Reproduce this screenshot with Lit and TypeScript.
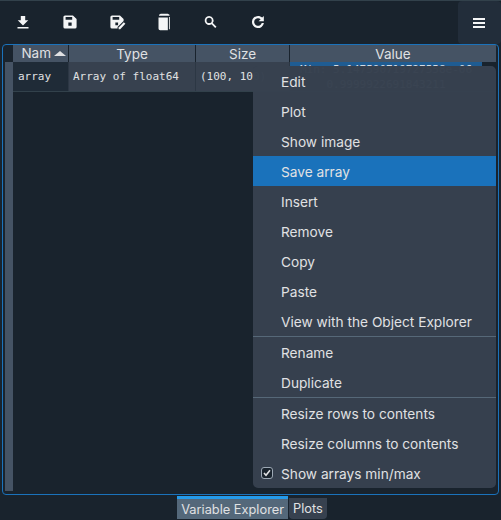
import { LitElement, html, css, svg } from 'lit';
import { customElement } from 'lit/decorators.js';

const ICONS = [
  svg`<path d="M5 14.500h10V16H5zM8 4.500h4v4h2.800L10 13.200 5.200 8.500H8z"/>`,
  svg`<path fill-rule="evenodd" d="M5.500 4h7.200L16 7.300v7.200a1.500 1.500 0 0 1-1.500 1.500h-9A1.500 1.500 0 0 1 4 14.500v-9A1.500 1.500 0 0 1 5.500 4zM6 5.500V8h6V5.500zM8.500 10.500v3h3v-3z"/>`,
  svg`<path fill-rule="evenodd" d="M5.500 4h7.200L16 7.300V9l-5.500 5.500V16h-5A1.500 1.500 0 0 1 4 14.500v-9A1.500 1.500 0 0 1 5.500 4zM6 5.500V8h6V5.500zM8.500 10.500v2.500h2.500v-2.500z"/><path d="M11.500 15l4.700-4.700 1.400 1.400-4.700 4.800h-1.400z"/>`,
  svg`<path d="M7 2.500h6.500l1.500 1v.8H5.500v-.8zM5 6h8.500v11.500H6.500A1.500 1.500 0 0 1 5 16zM14.500 5.500h.8v11h-.8z"/>`,
  svg`<path fill-rule="evenodd" d="M8.300 4.500a4.100 4.100 0 0 1 3.300 6.500l3.400 3.300-1.200 1.200-3.300-3.400A4.100 4.100 0 1 1 8.300 4.500zm0 1.700a2.400 2.400 0 1 0 0 4.800 2.400 2.400 0 0 0 0-4.800z"/>`,
  svg`<path d="M10 4.500c1.500 0 2.800.6 3.800 1.500L15.300 4.500v4.800h-4.800l1.900-1.900a3.500 3.500 0 1 0 1 3.600h2A5.500 5.500 0 1 1 10 4.500z"/>`,
];

type MenuEntry = { label: string; active?: boolean; checked?: boolean } | 'sep';

const MENU: MenuEntry[] = [
  { label: 'Edit' },
  { label: 'Plot' },
  { label: 'Show image' },
  { label: 'Save array', active: true },
  { label: 'Insert' },
  { label: 'Remove' },
  { label: 'Copy' },
  { label: 'Paste' },
  { label: 'View with the Object Explorer' },
  'sep',
  { label: 'Rename' },
  { label: 'Duplicate' },
  'sep',
  { label: 'Resize rows to contents' },
  { label: 'Resize columns to contents' },
  { label: 'Show arrays min/max', checked: true },
];

@customElement('app-root')
export class AppRoot extends LitElement {
  static override styles = css`
    :host {
      display: block;
      position: relative;
      width: 501px;
      height: 520px;
      overflow: hidden;
      background: #19232d;
      font-family: 'Inter', 'Liberation Sans', sans-serif;
      color: #e0e1e3;
    }
    .toolbar {
      display: flex;
      height: 44px;
      box-sizing: border-box;
      border-top: 1px solid #32414b;
    }
    .tools {
      display: flex;
      flex: 1;
      margin-left: -1px;
      padding-bottom: 2px;
    }
    .tool {
      width: 47px;
      display: flex;
      align-items: center;
      justify-content: center;
    }
    .tool svg {
      width: 22px;
      height: 22px;
      fill: #f4f5f6;
    }
    .burger {
      width: 43px;
      background: #222d3a;
      border-radius: 4px;
      display: flex;
      align-items: center;
      justify-content: center;
      flex-direction: column;
      gap: 2px;
      padding-right: 2px;
      box-sizing: border-box;
    }
    .burger i {
      display: block;
      width: 12px;
      height: 2px;
      background: #f4f5f6;
    }
    .frame {
      margin: 0 2px;
      height: 451px;
      box-sizing: border-box;
      border: 1px solid #1a72bb;
      border-radius: 4px;
      padding: 0 2px;
      display: flex;
    }
    .side {
      width: 8px;
      display: flex;
      flex-direction: column;
    }
    .side .corner {
      height: 17px;
    }
    .side .rest {
      flex: 1;
      background: #455364;
      margin-bottom: 3px;
    }
    .table {
      flex: 1;
      min-width: 0;
    }
    .head,
    .row {
      display: grid;
      grid-template-columns: 56px 127px 94px 1fr;
    }
    .head {
      height: 17px;
      background: #455364;
      font-size: 13.5px;
      line-height: 19px;
      text-align: center;
    }
    .head div {
      border-right: 1px solid #19232d;
      box-sizing: border-box;
      white-space: nowrap;
      overflow: hidden;
    }
    .head div:last-child {
      border-right: 0;
    }
    .head .name {
      display: flex;
      align-items: center;
      justify-content: flex-end;
      gap: 3px;
      padding-right: 2px;
    }
    .sort {
      width: 0;
      height: 0;
      border-left: 6px solid transparent;
      border-right: 6px solid transparent;
      border-bottom: 5px solid #e0e1e3;
    }
    .row {
      height: 29px;
      font-family: 'DejaVu Sans Mono', 'Liberation Mono', monospace;
      font-size: 11px;
      line-height: 29px;
      border-bottom: 1px solid #32414b;
    }
    .row div {
      background: #37414f;
      padding-left: 4px;
      white-space: nowrap;
      overflow: hidden;
      border-right: 1px solid #2c3744;
    }
    .row .name {
      background: #1f2b37;
      padding-left: 5px;
    }
    .row .val {
      background: #19232d;
      padding: 0 14px 0 0;
      line-height: 15px;
      color: #d5dbe2;
      border-right: 0;
      text-align: center;
    }
    .val span {
      display: block;
    }
    .val span:first-child {
      background: linear-gradient(#1f5c92 4px, transparent 4px);
    }
    .menu {
      position: absolute;
      left: 253px;
      top: 66px;
      width: 243px;
      height: 422px;
      box-sizing: border-box;
      background: rgba(55, 65, 79, 0.985);
      border-radius: 5px;
      font-size: 13.7px;
    }
    .item {
      height: 30px;
      line-height: 32px;
      padding-left: 28px;
      position: relative;
      white-space: nowrap;
    }
    .item.active {
      background: #1a72bb;
    }
    .sep {
      height: 1px;
      background: #566878;
    }
    .check {
      position: absolute;
      left: 8px;
      top: 9px;
      width: 12px;
      height: 12px;
      box-sizing: border-box;
      border: 1px solid #9da9b5;
      border-radius: 3px;
      background: #19232d;
    }
    .check svg {
      display: block;
      width: 10px;
      height: 10px;
      fill: none;
      stroke: #e0e1e3;
      stroke-width: 1.6;
    }
    .tabs {
      display: flex;
      justify-content: center;
      align-items: flex-start;
      gap: 1px;
      margin-top: 1px;
      padding-left: 3px;
      font-size: 12.8px;
    }
    .tab {
      height: 21px;
      line-height: 22px;
      margin-top: 2px;
      padding: 0 4px;
      background: #37414f;
      border-radius: 0 0 4px 4px;
    }
    .tab.on {
      height: 20px;
      margin-top: 0;
      background: #54687a;
      border-top: 3px solid #259ae9;
      border-radius: 0;
    }
  `;

  protected override render() {
    return html`
      <div class="toolbar">
        <div class="tools">
          ${ICONS.map(
            (icon) => html`<div class="tool"><svg viewBox="0 0 20 20">${icon}</svg></div>`
          )}
        </div>
        <div class="burger"><i></i><i></i><i></i></div>
      </div>
      <div class="frame">
        <div class="side">
          <div class="corner"></div>
          <div class="rest"></div>
        </div>
        <div class="table">
          <div class="head">
            <div class="name">Nam<span class="sort"></span></div>
            <div>Type</div>
            <div>Size</div>
            <div>Value</div>
          </div>
          <div class="row">
            <div class="name">array</div>
            <div>Array of float64</div>
            <div>(100, 100)</div>
            <div class="val">
              <span>Min: 5.147590719727558e-06</span>
              <span>0.9999922691843211</span>
            </div>
          </div>
        </div>
      </div>
      <div class="tabs">
        <div class="tab on">Variable Explorer</div>
        <div class="tab">Plots</div>
      </div>
      <div class="menu">
        ${MENU.map((entry) =>
          entry === 'sep'
            ? html`<div class="sep"></div>`
            : html`<div class="item ${entry.active ? 'active' : ''}">
                ${entry.checked
                  ? html`<span class="check"
                      ><svg viewBox="0 0 10 10"><path d="M2 5l2 2.200 4-5" /></svg
                    ></span>`
                  : ''}
                ${entry.label}
              </div>`
        )}
      </div>
    `;
  }
}
